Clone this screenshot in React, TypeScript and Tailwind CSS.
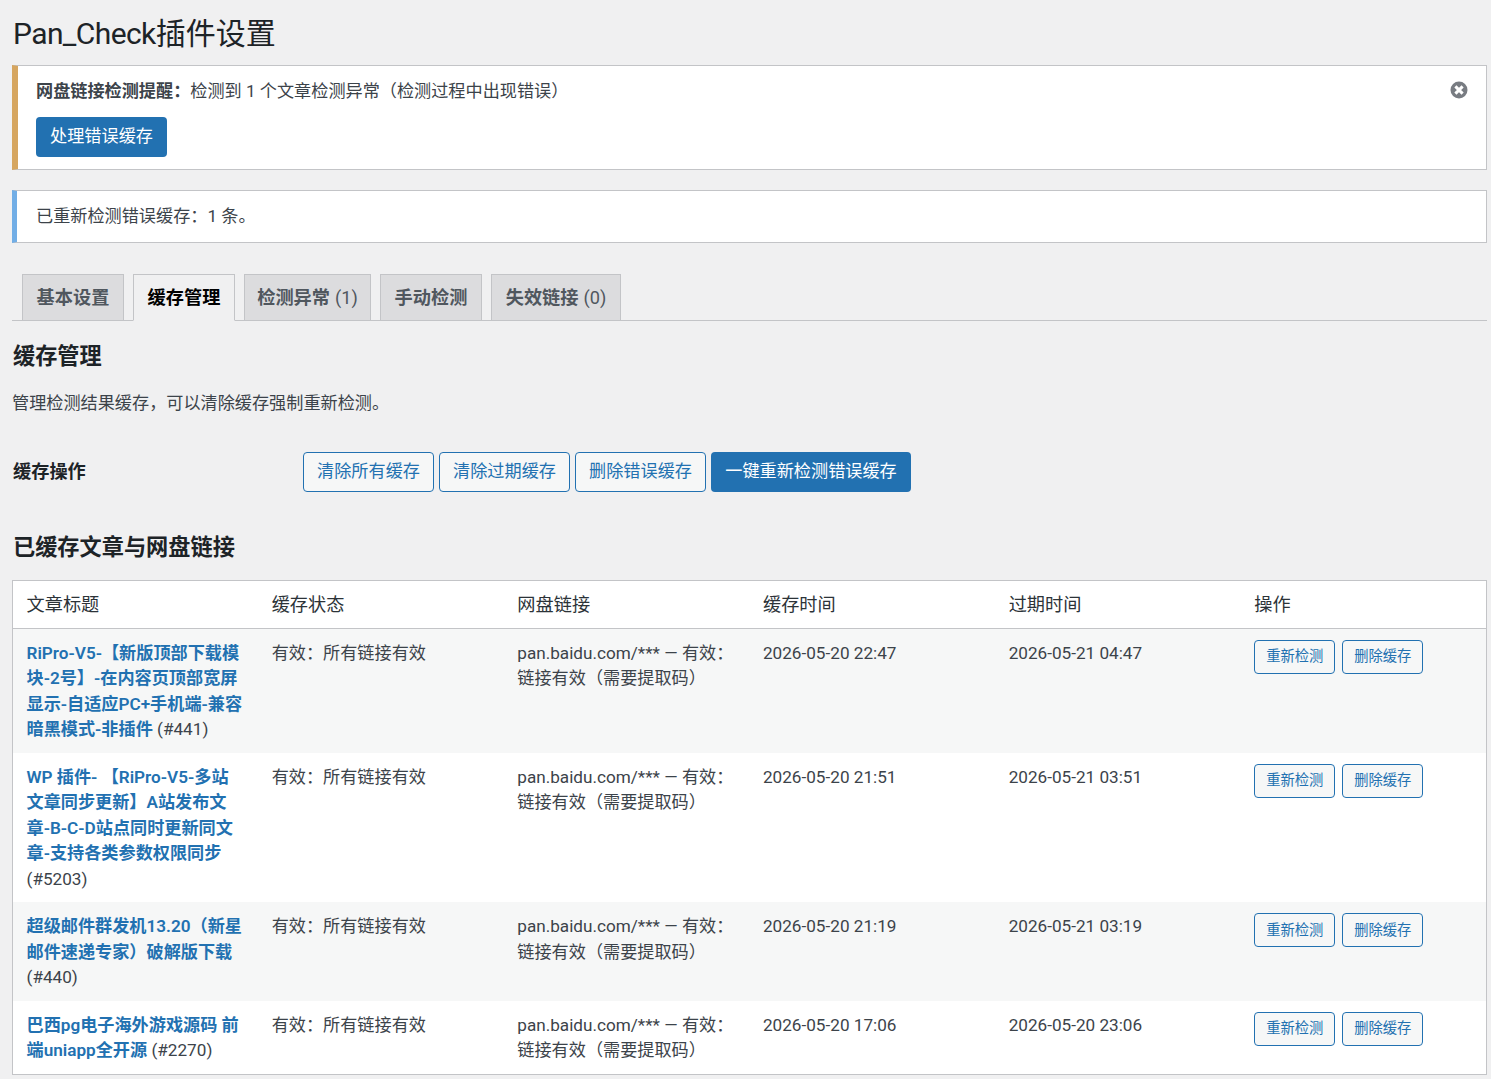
const rows = [
  {
    title: "RiPro-V5-【新版顶部下载模块-2号】-在内容页顶部宽屏显示-自适应PC+手机端-兼容暗黑模式-非插件",
    id: "#441",
    cached: "2026-05-20 22:47",
    expires: "2026-05-21 04:47",
  },
  {
    title: "WP 插件- 【RiPro-V5-多站文章同步更新】A站发布文章-B-C-D站点同时更新同文章-支持各类参数权限同步",
    id: "#5203",
    cached: "2026-05-20 21:51",
    expires: "2026-05-21 03:51",
  },
  {
    title: "超级邮件群发机13.20（新星邮件速递专家）破解版下载",
    id: "#440",
    cached: "2026-05-20 21:19",
    expires: "2026-05-21 03:19",
  },
  {
    title: "巴西pg电子海外游戏源码 前端uniapp全开源",
    id: "#2270",
    cached: "2026-05-20 17:06",
    expires: "2026-05-20 23:06",
  },
];

const tabs = [
  { label: "基本设置", width: "w-[102px]" },
  { label: "缓存管理", width: "w-[102px]", active: true },
  { label: "检测异常", count: "(1)", width: "w-[127px]" },
  { label: "手动检测", width: "w-[102px]" },
  { label: "失效链接", count: "(0)", width: "w-[130px]" },
];

const cacheActions = ["清除所有缓存", "清除过期缓存", "删除错误缓存"];
const headers = ["文章标题", "缓存状态", "网盘链接", "缓存时间", "过期时间", "操作"];

function DismissIcon() {
  return (
    <svg viewBox="0 0 20 20" className="h-[20px] w-[20px]">
      <circle cx="10" cy="10" r="8.5" fill="#787c82" />
      <path d="M6.4 6.4l7.2 7.2M13.6 6.4l-7.2 7.2" stroke="#fff" strokeWidth="3" />
    </svg>
  );
}

function SmallButton({ label }: { label: string }) {
  return (
    <button className="flex h-[34px] w-[81px] items-center justify-center rounded-[4px] border border-[#2271b1] bg-[#f6f7f7] pt-px text-[14.3px] text-[#2271b1]">
      {label}
    </button>
  );
}

export default function App() {
  return (
    <div className="h-[1079px] overflow-hidden bg-[#f0f0f1] pl-[12px] pr-[4px] font-['Roboto','Noto_Sans_CJK_SC',sans-serif] text-[17.15px] leading-[25.5px] text-[#3c434a]">
      <h1 className="pt-[13px] pb-[11px] pl-px text-[30px] leading-[41px] font-normal text-[#1d2327]">
        <span className="tracking-[-0.6px]">Pan_Check</span>插件设置
      </h1>

      <div className="relative h-[105px] border border-l-[6px] border-[#c3c4c7] border-l-[#d6a660] bg-white pl-[18px] pt-[13px]">
        <p>
          <strong className="font-bold">网盘链接检测提醒：</strong>检测到 1 个文章检测异常（检测过程中出现错误）
        </p>
        <button className="mt-[12px] flex h-[40px] w-[131px] items-center justify-center rounded-[4px] bg-[#2271b1] pt-px text-white">
          处理错误缓存
        </button>
        <span className="absolute right-[17px] top-[14px]">
          <DismissIcon />
        </span>
      </div>

      <div className="mt-[20px] flex h-[53px] items-center border border-l-[5px] border-[#c3c4c7] border-l-[#72aee6] bg-white pl-[19px]">
        已重新检测错误缓存：1 条。
      </div>

      <nav className="mt-[31px] flex h-[47px] gap-[9px] border-b border-[#c3c4c7] pl-[10px]">
        {tabs.map((tab) => (
          <div
            key={tab.label}
            className={`flex h-[47px] items-center justify-center gap-[5px] border border-[#c3c4c7] pt-px text-[18.2px] font-bold ${tab.width} ${
              tab.active ? "border-b-[#f0f0f1] bg-[#f0f0f1] text-black" : "bg-[#dcdcde] text-[#50575e]"
            }`}
          >
            {tab.label}
            {tab.count && <span className="font-normal">{tab.count}</span>}
          </div>
        ))}
      </nav>

      <h2 className="mt-[20px] pl-px text-[22.2px] leading-[30px] font-bold text-[#1d2327]">缓存管理</h2>
      <p className="mt-[20px]">管理检测结果缓存，可以清除缓存强制重新检测。</p>

      <div className="mt-[35px] flex items-start">
        <div className="w-[291px] pt-[7px] pl-px text-[18.2px] font-bold text-[#1d2327]">缓存操作</div>
        <div className="flex gap-[5px]">
          {cacheActions.map((label) => (
            <button
              key={label}
              className="flex h-[40px] w-[131px] items-center justify-center rounded-[4px] border border-[#2271b1] bg-[#f6f7f7] pt-px text-[#2271b1]"
            >
              {label}
            </button>
          ))}
          <button className="flex h-[40px] w-[200px] items-center justify-center rounded-[4px] bg-[#2271b1] pt-px text-white">
            一键重新检测错误缓存
          </button>
        </div>
      </div>

      <h2 className="mt-[40px] pl-px text-[22.2px] leading-[30px] font-bold text-[#1d2327]">已缓存文章与网盘链接</h2>

      <table className="mt-[18px] w-full table-fixed border border-[#c3c4c7] bg-white">
        <thead>
          <tr className="border-b border-[#c3c4c7]">
            {headers.map((header) => (
              <th key={header} className="h-[48px] px-[13.5px] pt-[2px] text-left text-[18.2px] font-normal text-[#2c3338]">
                {header}
              </th>
            ))}
          </tr>
        </thead>
        <tbody>
          {rows.map((row, i) => (
            <tr key={row.id} className={i % 2 === 0 ? "bg-[#f6f7f7]" : "bg-white"}>
              <td className="px-[13.5px] pt-[12px] pb-[10px] align-top">
                <a className="font-semibold text-[#2271b1]">{row.title}</a> <span>({row.id})</span>
              </td>
              <td className="px-[13.5px] pt-[12px] pb-[10px] align-top">有效：所有链接有效</td>
              <td className="px-[13.5px] pt-[12px] pb-[10px] align-top">pan.baidu.com/*** — 有效：链接有效（需要提取码）</td>
              <td className="px-[13.5px] pt-[12px] pb-[10px] align-top">{row.cached}</td>
              <td className="px-[13.5px] pt-[12px] pb-[10px] align-top">{row.expires}</td>
              <td className="px-[13.5px] pt-[11px] pb-[11px] align-top">
                <div className="flex gap-[7px]">
                  <SmallButton label="重新检测" />
                  <SmallButton label="删除缓存" />
                </div>
              </td>
            </tr>
          ))}
        </tbody>
      </table>
    </div>
  );
}
